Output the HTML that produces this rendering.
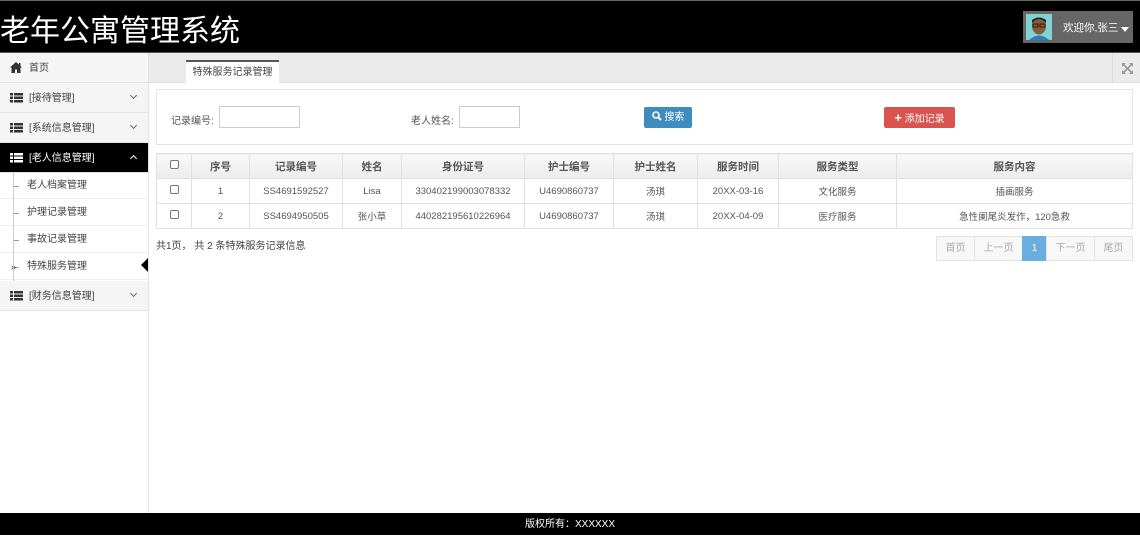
<!DOCTYPE html><html><head><meta charset="utf-8"><style>
*{box-sizing:border-box;margin:0;padding:0}
body{width:1140px;height:535px;position:relative;overflow:hidden;background:#fff;font-family:"Liberation Sans","Noto Sans CJK SC",sans-serif;font-size:10px;color:#555}
.hd{position:absolute;left:0;top:0;width:1140px;height:53px;background:#000;border-top:1px solid #666;border-bottom:1px solid #555}
.hd h1{position:absolute;left:0;top:5px;font-size:30px;font-weight:normal;color:#fff;letter-spacing:0}
.user{position:absolute;left:1023px;top:10px;width:110px;height:32px;background:#666}
.user .av{position:absolute;left:3px;top:3px;width:26px;height:26px;background:#7fd3d0}
.user span{position:absolute;left:40px;top:9px;color:#fff;font-size:10.5px}
.user i{position:absolute;left:98px;top:16px;border:4px solid transparent;border-top:5px solid #fff}
.sb{position:absolute;left:0;top:53px;width:149px;height:460px;border-right:1px solid #e3e3e3;background:#fff}
.it{position:absolute;left:0;width:148px;height:30px;background:#f5f5f5;border-bottom:1px solid #e3e3e3;font-size:10px;color:#444;line-height:31px;padding-left:29px}
.it.on{background:#000;color:#fff}
.ic{position:absolute;left:10px;top:10px;width:13px;height:10px;background:repeating-linear-gradient(#333 0 2.5px,transparent 2.5px 3.5px)}
.on .ic{background:repeating-linear-gradient(#fff 0 2.5px,transparent 2.5px 3.5px)}
.ic:after{content:"";position:absolute;left:3px;top:0;width:1px;height:10px;background:#f5f5f5}
.on .ic:after{background:#000}
.chev{position:absolute;left:131px;top:10px;width:5px;height:5px;border-right:1.2px solid #666;border-bottom:1.2px solid #666;transform:rotate(45deg)}
.on .chev{border-color:#fff;transform:rotate(-135deg);top:13px}
.sub{position:absolute;left:0;width:148px;height:27px;border-bottom:1px solid #eee;line-height:28px;padding-left:27px;color:#444}
.sub:before{content:"";position:absolute;left:14px;top:14px;width:5px;height:1px;background:#999}
.vl{position:absolute;left:13px;top:172px;width:1px;height:109px;background:#ccc}
.tb{position:absolute;left:149px;top:53px;width:991px;height:30px;background:#ebebeb;border-bottom:1px solid #e0e0e0}
.tab{position:absolute;left:37px;top:7px;width:93px;height:23px;background:#fff;border-top:2px solid #555;text-align:center;line-height:22px;color:#444}
.fs{position:absolute;right:0;top:0;width:28px;height:30px;border-left:1px solid #ddd}
.sr{position:absolute;left:156px;top:89px;width:977px;height:56px;border:1px solid #e5e5e5}
.lbl{position:absolute;top:112px;color:#555}
.inp{position:absolute;top:106px;height:22px;border:1px solid #ccc;background:#fff}
.btn{position:absolute;top:107px;height:21px;color:#fff;border-radius:2px;text-align:center;line-height:22px;font-size:10px}
table{position:absolute;left:156px;top:153px;width:977px;border-collapse:collapse;font-size:9.5px;color:#555}
td,th{border:1px solid #e0e0e0;text-align:center;height:25px;font-weight:normal}
th{background:linear-gradient(#f8f8f8,#ececec);font-weight:bold;font-size:10.5px;color:#555}
.cb{display:inline-block;width:9px;height:9px;border:1px solid #777;border-radius:2px;background:#fff}
.info{position:absolute;left:156px;top:237px;color:#444}
.pg{position:absolute;left:937px;top:236px;height:25px;display:flex}
.pg div{border:1px solid #e3e3e3;margin-left:-1px;line-height:23px;text-align:center;color:#aaa;background:#f8f8f8}
.ft{position:absolute;left:0;top:513px;width:1140px;height:22px;background:#000;color:#fff;text-align:center;line-height:24px;font-size:10px}
</style></head><body>
<div class="hd"><h1>老年公寓管理系统</h1>
<div class="user"><div class="av"><svg width="26" height="26"><rect width="26" height="26" fill="#7fd3d0"/><ellipse cx="13" cy="12" rx="7" ry="8.5" fill="#8a5a35"/><path d="M6 9q7-8 14 0v-3q-7-5-14 0z" fill="#222"/><rect x="7" y="10" width="5" height="3" fill="none" stroke="#222"/><rect x="14" y="10" width="5" height="3" fill="none" stroke="#222"/><path d="M3 26q10-9 20 0z" fill="#2a7fc0"/></svg></div><span>欢迎你,张三</span><i></i></div></div>
<div class="sb">
<div class="it" style="top:0"><svg style="position:absolute;left:10px;top:9px" width="12" height="11"><path d="M6 0L0 5.5h1.5V11h3.5V7.5h2V11h3.5V5.5H12z" fill="#333"/><rect x="9" y="1" width="1.5" height="3" fill="#333"/></svg>首页</div>
<div class="it" style="top:30px"><div class="ic"></div>[接待管理]<div class="chev"></div></div>
<div class="it" style="top:60px"><div class="ic"></div>[系统信息管理]<div class="chev"></div></div>
<div class="it on" style="top:90px"><div class="ic"></div>[老人信息管理]<div class="chev"></div></div>
<div class="sub" style="top:119px">老人档案管理</div>
<div class="sub" style="top:146px">护理记录管理</div>
<div class="sub" style="top:173px">事故记录管理</div>
<div class="sub" style="top:200px">特殊服务管理<span style="position:absolute;left:11px;top:0;color:#333;font-size:9px">»</span><span style="position:absolute;left:141px;top:5px;border:7px solid transparent;border-right:7px solid #000;border-left:0;height:0"></span></div>
<div class="it" style="top:228px"><div class="ic"></div>[财务信息管理]<div class="chev"></div></div>
</div>
<div class="vl"></div>
<div class="tb"><div class="tab">特殊服务记录管理</div><div class="fs"><svg style="position:absolute;left:9px;top:10px" width="11" height="11" stroke="#999" stroke-width="1.6" fill="#999"><path d="M1 1L10 10M10 1L1 10" fill="none"/><path d="M0 0h4L0 4zM11 0v4L7 0zM0 11v-4l4 4zM11 11h-4l4-4z" stroke="none"/></svg></div></div>
<div class="sr"></div>
<div class="lbl" style="left:171px">记录编号:</div><div class="inp" style="left:219px;width:81px"></div>
<div class="lbl" style="left:411px">老人姓名:</div><div class="inp" style="left:459px;width:61px"></div>
<div class="btn" style="left:644px;width:48px;background:#3f8dbf"><svg width="10" height="10" style="vertical-align:-1px"><circle cx="4" cy="4" r="3" stroke="#fff" stroke-width="1.6" fill="none"/><path d="M6 6l3 3" stroke="#fff" stroke-width="2"/></svg> 搜索</div>
<div class="btn" style="left:884px;width:71px;background:#d9534f"><b style="font-size:13px">+</b> 添加记录</div>
<table>
<tr><th style="width:35px"><span class="cb"></span></th><th style="width:58px">序号</th><th style="width:93px">记录编号</th><th style="width:59px">姓名</th><th style="width:123px">身份证号</th><th style="width:89px">护士编号</th><th style="width:84px">护士姓名</th><th style="width:81px">服务时间</th><th style="width:118px">服务类型</th><th>服务内容</th></tr>
<tr><td><span class="cb"></span></td><td>1</td><td>SS4691592527</td><td>Lisa</td><td>330402199003078332</td><td>U4690860737</td><td>汤琪</td><td>20XX-03-16</td><td>文化服务</td><td>插画服务</td></tr>
<tr><td><span class="cb"></span></td><td>2</td><td>SS4694950505</td><td>张小草</td><td>440282195610226964</td><td>U4690860737</td><td>汤琪</td><td>20XX-04-09</td><td>医疗服务</td><td>急性阑尾炎发作，120急救</td></tr>
</table>
<div class="info">共1页， 共 2 条特殊服务记录信息</div>
<div class="pg"><div style="width:39px">首页</div><div style="width:49px">上一页</div><div style="width:25px;background:#6aaede;color:#fff;border-color:#6aaede">1</div><div style="width:49px">下一页</div><div style="width:39px">尾页</div></div>
<div class="ft">版权所有：XXXXXX</div>
</body></html>
